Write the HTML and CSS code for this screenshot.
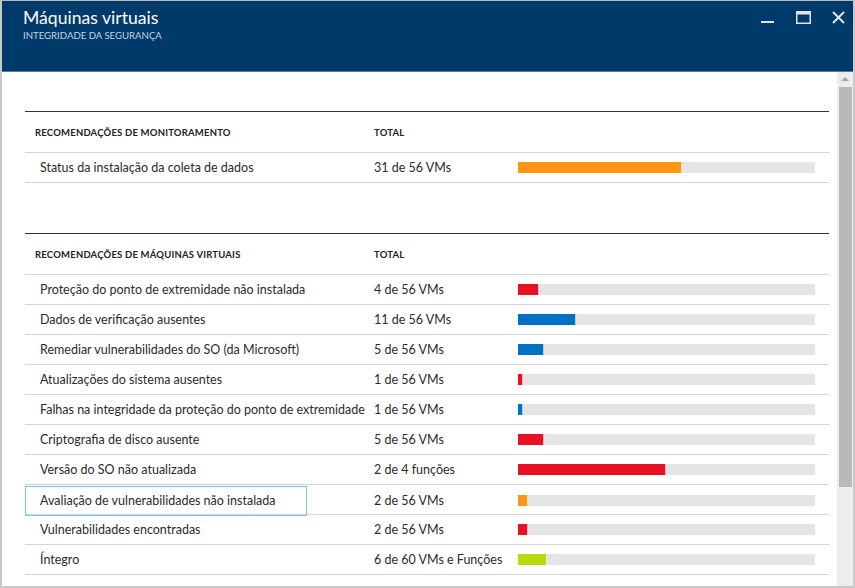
FILE: index.html
```html
<!DOCTYPE html>
<html lang="pt-BR">
<head>
<meta charset="utf-8">
<title>Máquinas virtuais</title>
<link rel="stylesheet" href="styles.css">
</head>
<body>
<div class="window">
  <header class="header">
    <div class="titles">
      <div class="title">Máquinas virtuais</div>
      <div class="subtitle">INTEGRIDADE DA SEGURANÇA</div>
    </div>
    <div class="controls">
      <svg class="ctl ctl-min" width="14" height="18" viewBox="0 0 14 18"><rect x="0" y="15" width="13" height="2" fill="#dfe5ec"/></svg>
      <svg class="ctl ctl-max" width="15" height="13" viewBox="0 0 15 13"><rect x="0.75" y="0.75" width="13.5" height="11.5" fill="none" stroke="#dfe5ec" stroke-width="1.5"/><rect x="0" y="0" width="15" height="3.5" fill="#dfe5ec"/></svg>
      <svg class="ctl ctl-close" width="13" height="13" viewBox="0 0 13 13"><path d="M1 1 L12 12 M12 1 L1 12" stroke="#dfe5ec" stroke-width="2"/></svg>
    </div>
  </header>
  <div class="body">
    <main class="content">
      <section class="table">
        <div class="row head">
          <div class="c-label">RECOMENDAÇÕES DE MONITORAMENTO</div>
          <div class="c-total">TOTAL</div>
          <div></div>
        </div>
        <div class="row">
          <div class="c-label">Status da instalação da coleta de dados</div>
          <div class="c-total">31 de 56 VMs</div>
          <div class="bar"><span class="fill orange" style="width:164px"></span></div>
        </div>
      </section>
      <section class="table second">
        <div class="row head">
          <div class="c-label">RECOMENDAÇÕES DE MÁQUINAS VIRTUAIS</div>
          <div class="c-total">TOTAL</div>
          <div></div>
        </div>
        <div class="row">
          <div class="c-label">Proteção do ponto de extremidade não instalada</div>
          <div class="c-total">4 de 56 VMs</div>
          <div class="bar"><span class="fill red" style="width:21px"></span></div>
        </div>
        <div class="row">
          <div class="c-label">Dados de verificação ausentes</div>
          <div class="c-total">11 de 56 VMs</div>
          <div class="bar"><span class="fill blue" style="width:58px"></span></div>
        </div>
        <div class="row">
          <div class="c-label">Remediar vulnerabilidades do SO (da Microsoft)</div>
          <div class="c-total">5 de 56 VMs</div>
          <div class="bar"><span class="fill blue" style="width:26px"></span></div>
        </div>
        <div class="row">
          <div class="c-label">Atualizações do sistema ausentes</div>
          <div class="c-total">1 de 56 VMs</div>
          <div class="bar"><span class="fill red" style="width:5px"></span></div>
        </div>
        <div class="row">
          <div class="c-label">Falhas na integridade da proteção do ponto de extremidade</div>
          <div class="c-total">1 de 56 VMs</div>
          <div class="bar"><span class="fill blue" style="width:5px"></span></div>
        </div>
        <div class="row">
          <div class="c-label">Criptografia de disco ausente</div>
          <div class="c-total">5 de 56 VMs</div>
          <div class="bar"><span class="fill red" style="width:26px"></span></div>
        </div>
        <div class="row">
          <div class="c-label">Versão do SO não atualizada</div>
          <div class="c-total">2 de 4 funções</div>
          <div class="bar"><span class="fill red" style="width:148px"></span></div>
        </div>
        <div class="row">
          <div class="c-label focused">Avaliação de vulnerabilidades não instalada</div>
          <div class="c-total">2 de 56 VMs</div>
          <div class="bar"><span class="fill orange" style="width:10px"></span></div>
        </div>
        <div class="row">
          <div class="c-label">Vulnerabilidades encontradas</div>
          <div class="c-total">2 de 56 VMs</div>
          <div class="bar"><span class="fill red" style="width:10px"></span></div>
        </div>
        <div class="row">
          <div class="c-label">Íntegro</div>
          <div class="c-total">6 de 60 VMs e Funções</div>
          <div class="bar"><span class="fill green" style="width:29px"></span></div>
        </div>
      </section>
    </main>
    <div class="scrollbar">
      <div class="arrow"></div>
      <div class="thumb"></div>
    </div>
  </div>
</div>
</body>
</html>
```
FILE: styles.css
```css
* { box-sizing: border-box; }
html, body { margin: 0; padding: 0; }
body {
  font-family: "Lato", "Open Sans", sans-serif;
  color: #2b2b2b;
  background: #fff;
}
.window {
  width: 855px;
  height: 588px;
  display: flex;
  flex-direction: column;
  border: 1px solid #b9b9b9;
  border-left: 2px solid #c9c9c9;
  border-right: 2px solid #c9c9c9;
  border-bottom: 2px solid #c9c9c9;
  overflow: hidden;
}
.header {
  height: 71px;
  flex: none;
  background: #003a6b;
  display: flex;
  justify-content: space-between;
  padding: 6px 0 0 21px;
  border-bottom: 1px solid #5d7893;
}
.title {
  color: #fff;
  font-size: 17.6px;
  line-height: 22px;
  font-weight: 400;
}
.subtitle {
  color: #c5d2df;
  font-size: 9.6px;
  line-height: 14px;
}
.controls {
  display: flex;
  align-items: flex-start;
  padding: 0 8px 0 0;
  gap: 21px;
}
.ctl { flex: none; }
.ctl-min { margin-top: -1px; }
.ctl-max { margin-top: 4px; }
.ctl-close { margin-top: 4px; }
.body {
  flex: 1;
  display: flex;
  min-height: 0;
}
.content {
  flex: 1;
  padding: 39px 8px 0 23px;
}
.table {
  border-top: 1px solid #333;
}
.table.second { margin-top: 50px; }
.row {
  display: grid;
  grid-template-columns: 349px 144px 297px 1fr;
  align-items: center;
  height: 30px;
  border-bottom: 1px solid #d4d4d4;
  font-size: 12.5px;
  position: relative;
}
.row.head {
  height: 41px;
  font-size: 9.5px;
  font-weight: 700;
  color: #222;
  letter-spacing: 0.2px;
}
.row.head .c-label { padding-left: 10px; }
.c-label { padding-left: 15px; white-space: nowrap; }
.c-total { white-space: nowrap; }
.c-label.focused { height: 30px; display: flex; align-items: center; }
.c-label.focused::after {
  content: "";
  position: absolute;
  left: 0;
  top: 1px;
  width: 280px;
  height: 28px;
  border: 1px solid #6fcbef;
}
.bar {
  height: 11px;
  background: #e5e5e5;
  display: flex;
}
.fill {
  display: block;
  height: 11px;
  border-right: 1px solid rgba(255,255,255,0.7);
}
.orange { background: #ff9613; }
.red { background: #e81123; }
.blue { background: #0072c6; }
.green { background: #bad80a; }
.scrollbar {
  width: 16px;
  flex: none;
  background: #ededed;
  display: flex;
  flex-direction: column;
  align-items: center;
  padding-top: 5px;
}
.arrow {
  flex: none;
  width: 0;
  height: 0;
  border-left: 4px solid transparent;
  border-right: 4px solid transparent;
  border-bottom: 4px solid #a6a6a6;
}
.thumb {
  flex: none;
  margin-top: 6px;
  width: 13px;
  height: 400px;
  background: #b9b9b9;
  align-self: flex-end;
  margin-right: 1px;
}
```
